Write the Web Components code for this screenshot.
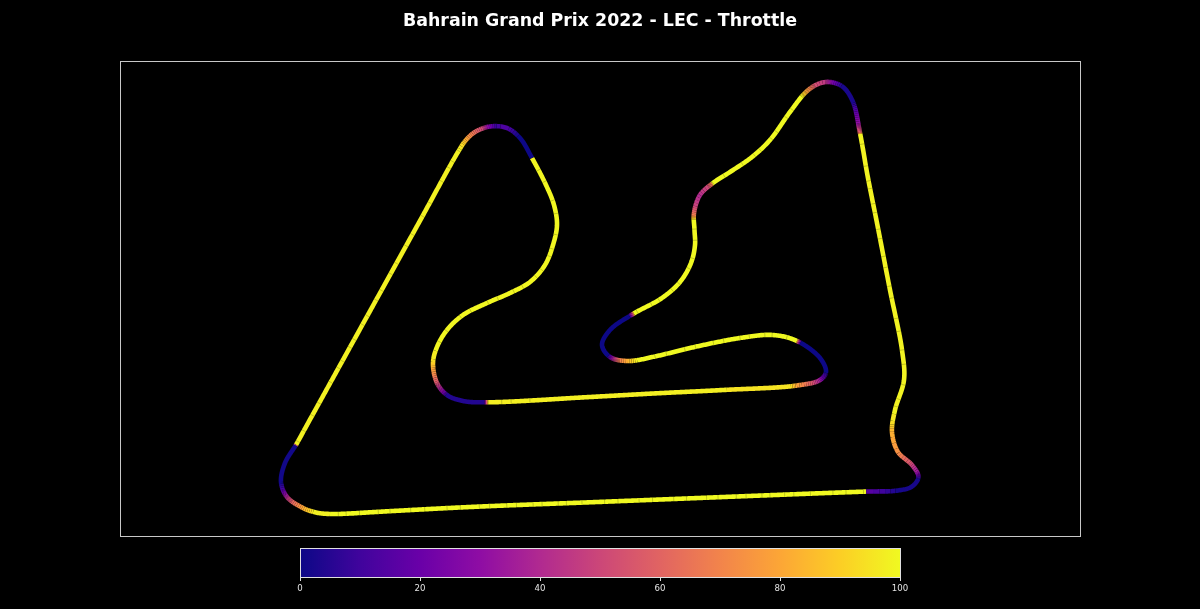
<!DOCTYPE html>
<html><head><meta charset="utf-8"><title>Bahrain Grand Prix 2022 - LEC - Throttle</title>
<style>html,body{margin:0;background:#000;height:100%;overflow:hidden}body{font-family:"DejaVu Sans",sans-serif}</style></head>
<body><telemetry-figure title-text="Bahrain Grand Prix 2022 - LEC - Throttle"></telemetry-figure>
<script>
const PLASMA=['#0d0887','#41049d','#6a00a8','#8f0da4','#b12a90','#cc4778','#e16462','#f2844b','#fca636','#fcce25','#f0f921'];
const rgb=h=>[1,3,5].map(i=>parseInt(h.substr(i,2),16));
function plasma(v){const t=Math.min(1,Math.max(0,v/100))*10,i=Math.min(9,Math.floor(t)),f=t-i,a=rgb(PLASMA[i]),b=rgb(PLASMA[i+1]);
  return `rgb(${a.map((c,k)=>Math.round(c+(b[k]-c)*f)).join(',')})`;}
const GEOM=[[330,514],[350,513.5],[370,512.3],[470,507],[600,501.9],[780,494.8],[865,491.6],[897,490.6],[912,486.5],[918.5,477],[912,465],[898,452],[892,432],[895,410],[904,380],[902,350],[890,290],[877,223],[868,178],[860,133],[853,102],[843,87],[830,82],[818,84],[806,92],[790,112],[770,140],[752,157],[730,172],[713,183],[700,195],[694,213],[694.5,230],[695,245],[691,263],[680,282],[662,298],[633,314],[610,330],[602,345],[610,357],[628,361],[657,356],[690,348],[740,338],[773,335],[797,341],[820,358],[826,372],[820,380],[797,385.5],[723,390],[657,393.3],[590,397],[487,402.3],[463,401],[447,395],[437,383],[433,363],[437,347],[447,330],[463,315],[487,303],[510,293],[530,282],[545,265],[553,245],[557,225],[554,205],[546,185],[532,158],[520,138],[507,128],[490,126.5],[475,132],[466,140],[458,152],[420,220.7],[380,293],[340,365.3],[305,428.6],[296.5,444],[285,463],[281,482],[287,497],[303,508],[316,512.5]];
const STOPS=[[330,514,100],[865,491.6,100],[866.5,491.5,15],[897,490.6,1],[918,480,1],[917,472,35],[910,463,55],[898,452,75],[892,430,85],[892.5,424,95],[895,410,100],[860.5,135,100],[860,133,60],[858,123,30],[853,102,1],[843,87,1],[833,82,25],[825,82,45],[815,86,55],[808,90,75],[802,97,100],[713.5,183,100],[712.5,184,70],[708,187,50],[700,195,40],[695,206,50],[694,215,70],[694,220,100],[634.5,313.5,100],[633,314.5,50],[630,316,0],[608,355,0],[612,358,35],[620,361,70],[628,361,85],[637,360.5,100],[796,341,100],[797.5,341.5,50],[800,343,0],[826,372,2],[823,378,20],[820,380,35],[810,383.5,60],[797,386,80],[790,386.5,97],[488,402,100],[487,402,55],[485,402,4],[447,395,6],[443,392,25],[438,383,55],[435,373,75],[433.5,363,92],[434,358,98],[437,347,100],[533,159,100],[532,158,0],[520,138,0],[507,128,15],[497,127,8],[488,127,30],[483,128,50],[470,137,75],[463,143,92],[458,150,100],[296.5,444.5,100],[295.5,446,1],[281,482,1],[282.5,489,12],[287,497,40],[292,502,60],[303,508,82],[313,511,98],[330,514,100]];
function sample(points){const out=[],n=points.length;
  const d=(a,b)=>Math.max(.01,Math.sqrt(Math.hypot(a[0]-b[0],a[1]-b[1])));
  const L=(a,b,ta,tb,t)=>{const k=(t-ta)/(tb-ta);return [a[0]+(b[0]-a[0])*k,a[1]+(b[1]-a[1])*k];};
  for(let i=0;i<n;i++){const p0=points[(i-1+n)%n],p1=points[i],p2=points[(i+1)%n],p3=points[(i+2)%n];
    const t0=0,t1=d(p0,p1),t2=t1+d(p1,p2),t3=t2+d(p2,p3);
    const steps=Math.max(1,Math.ceil(Math.hypot(p1[0]-p2[0],p1[1]-p2[1])));
    for(let s=0;s<steps;s++){const t=t1+(t2-t1)*s/steps;
      const A1=L(p0,p1,t0,t1,t),A2=L(p1,p2,t1,t2,t),A3=L(p2,p3,t2,t3,t);
      const B1=L(A1,A2,t0,t2,t),B2=L(A2,A3,t1,t3,t);out.push(L(B1,B2,t1,t2,t));}
  }
  out.push(points[0].slice());return out;}
function colourise(pts){const idx=[];let prev=-1;
  STOPS.forEach(st=>{let best=-1,bd=1e9;for(let i=Math.max(0,prev);i<Math.min(pts.length,prev+750);i++){const q=Math.hypot(pts[i][0]-st[0],pts[i][1]-st[1]);if(q<bd){bd=q;best=i;}}
    best=Math.max(best,prev+1);idx.push(best);prev=best;});
  idx[idx.length-1]=pts.length-1;
  for(let k=0;k<STOPS.length-1;k++){for(let i=idx[k];i<=idx[k+1];i++){const f=(i-idx[k])/Math.max(1,idx[k+1]-idx[k]);pts[i][2]=STOPS[k][2]+(STOPS[k+1][2]-STOPS[k][2])*f;}}
  return pts;}
class TelemetryFigure extends HTMLElement{connectedCallback(){const r=this.attachShadow({mode:'open'});
  r.innerHTML=`<style>:host{display:flex;flex-direction:column;width:1200px;height:609px;background:#000;align-items:center;filter:blur(.35px)}</style>
  <figure-title></figure-title><track-plot></track-plot><color-bar></color-bar>`;
  r.querySelector('figure-title').textContent=this.getAttribute('title-text');}}
class FigureTitle extends HTMLElement{constructor(){super();this.attachShadow({mode:'open'}).innerHTML=`<style>:host{display:block;height:61px;width:100%;box-sizing:border-box;padding-top:9px;text-align:center;color:#fff;font:700 17.4px/22px "DejaVu Sans",sans-serif}</style><slot></slot>`;}}
class TrackPlot extends HTMLElement{constructor(){super();const r=this.attachShadow({mode:'open'});
  const pts=colourise(sample(GEOM));let s='',start=0;
  const q=p=>p[0].toFixed(2)+','+p[1].toFixed(2);
  for(let i=1;i<pts.length;i++){
    const same=Math.abs(pts[i][2]-pts[start][2])<2.5;
    if(!same||i===pts.length-1){const c=pts.slice(start,i+1).map(q).join(' ');
      s+=`<polyline points="${c}" stroke="${plasma(pts[start][2])}"/>`;start=i;}
  }
  let marks='',k=0;
  for(let i=9;i<pts.length-1;i+=8+(k*37)%15,k++){if(pts[i][2]<99.5)continue;
    const a=pts[i-1],b=pts[i+1],l=Math.hypot(b[0]-a[0],b[1]-a[1])||1,nx=-(b[1]-a[1])/l*2.3,ny=(b[0]-a[0])/l*2.3;
    marks+=`<line x1="${(pts[i][0]+nx).toFixed(2)}" y1="${(pts[i][1]+ny).toFixed(2)}" x2="${(pts[i][0]-nx).toFixed(2)}" y2="${(pts[i][1]-ny).toFixed(2)}"/>`;}
  r.innerHTML=`<style>:host{display:block;width:961px;height:476px;box-sizing:border-box;border:1px solid #c8c8c8}svg{display:block;width:959px;height:474px}</style>
  <svg viewBox="121 62 959 474" stroke-width="4.6" stroke-linecap="butt" stroke-linejoin="round" fill="none" aria-label="Track map">${s}<g stroke="#000" stroke-opacity=".22" stroke-width=".9">${marks}</g></svg>`;}}
class ColorBar extends HTMLElement{constructor(){super();const r=this.attachShadow({mode:'open'});
  const ticks=[0,20,40,60,80,100].map(v=>`<div class="t"><i></i><span>${v}</span></div>`).join('');
  r.innerHTML=`<style>:host{display:block;width:601px;margin-top:11px;color:#e4e4e4;font:8.6px/10px "DejaVu Sans",sans-serif}
  .bar{height:30px;box-sizing:border-box;border:1px solid #e0e0e0;background:linear-gradient(90deg,${PLASMA.join(',')})}
  .ticks{display:flex;justify-content:space-between}.t{width:1px;display:flex;flex-direction:column;align-items:center}
  i{display:block;width:1px;height:3px;background:#e0e0e0;flex:none}span{display:block;margin-top:2px;white-space:nowrap}</style>
  <div class="bar"></div><div class="ticks">${ticks}</div>`;}}
customElements.define('figure-title',FigureTitle);customElements.define('track-plot',TrackPlot);customElements.define('color-bar',ColorBar);customElements.define('telemetry-figure',TelemetryFigure);
</script></body></html>
